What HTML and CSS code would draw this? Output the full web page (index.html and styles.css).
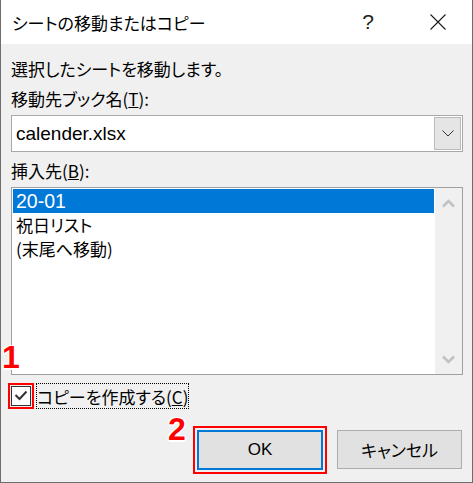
FILE: index.html
```html
<!DOCTYPE html>
<html lang="ja">
<head>
<meta charset="utf-8">
<title>シートの移動またはコピー</title>
<link rel="stylesheet" href="styles.css">
</head>
<body>
<div class="window">
  <div class="titlebar">
    <div class="title">シートの移動またはコピー</div>
    <div class="help">?</div>
    <div class="close">
      <svg width="16" height="16" viewBox="0 0 16 16"><path d="M0.5 0.5L15.5 15.5M15.5 0.5L0.5 15.5" stroke="#1a1a1a" stroke-width="1.1" fill="none"/></svg>
    </div>
  </div>
  <div class="content">
    <div class="label">選択したシートを移動します。</div>
    <div class="label second">移動先ブック名(<u>T</u>):</div>
    <div class="combo">
      <span class="combo-text">calender.xlsx</span>
      <span class="combo-btn"><svg width="12" height="7" viewBox="0 0 12 7"><polyline points="0.5,0.5 6,6 11.5,0.5" stroke="#333" stroke-width="1" fill="none"/></svg></span>
    </div>
    <div class="label third">挿入先(<u>B</u>):</div>
    <div class="listbox">
      <ul class="items">
        <li class="item selected"><span class="lat">20-01</span></li>
        <li class="item">祝日リスト</li>
        <li class="item">(末尾へ移動)</li>
      </ul>
      <div class="scrollbar">
        <div class="arrow"><svg width="13" height="9" viewBox="0 0 13 9"><polyline points="1,7.5 6.5,2 12,7.5" stroke="#c2c2c2" stroke-width="2.6" fill="none"/></svg></div>
        <div class="arrow"><svg width="13" height="9" viewBox="0 0 13 9"><polyline points="1,1.5 6.5,7 12,1.5" stroke="#c2c2c2" stroke-width="2.6" fill="none"/></svg></div>
      </div>
    </div>
    <div class="check-row">
      <span class="checkbox"><svg width="18" height="18" viewBox="0 0 18 18"><polyline points="3.5,8 7.5,12 14.5,4.5" stroke="#333" stroke-width="2" fill="none"/></svg></span>
      <span class="check-label">コピーを作成する(<u>C</u>)</span>
    </div>
    <div class="buttons">
      <button class="btn ok">OK</button>
      <button class="btn">キャンセル</button>
    </div>
  </div>
  <div class="marker m1">1</div>
  <div class="marker m2">2</div>
</div>
</body>
</html>
```
FILE: styles.css
```css
html, body {
  margin: 0;
  padding: 0;
  background: #fff;
}

.window {
  position: relative;
  width: 473px;
  height: 483px;
  box-sizing: border-box;
  border: 1px solid #6d6d6d;
  border-top: 0;
  background: #f0f0f0;
  display: flex;
  flex-direction: column;
  font-family: "Noto Sans CJK JP", sans-serif;
  font-feature-settings: "palt";
  color: #000;
}

.titlebar {
  flex: none;
  height: 44px;
  background: #fff;
  display: flex;
  align-items: center;
}

.title {
  flex: 1;
  padding-left: 11px;
  padding-top: 2px;
  font-size: 17px;
  line-height: 20px;
}

.help {
  width: 20px;
  text-align: center;
  font-family: "Liberation Sans", sans-serif;
  font-size: 21px;
  line-height: 24px;
  color: #222;
  margin-right: 52px;
}

.close {
  width: 16px;
  height: 16px;
  margin-right: 26px;
  display: flex;
}

.content {
  display: flex;
  flex-direction: column;
  padding: 14px 9px 0 10px;
}

.label {
  font-size: 17px;
  line-height: 21px;
  height: 21px;
  white-space: nowrap;
}

.label.second {
  margin-top: 9px;
}

.label.third {
  margin-top: 8px;
}

.combo {
  margin-top: 6px;
  height: 37px;
  box-sizing: border-box;
  border: 1px solid #a9a9a9;
  background: #fff;
  display: flex;
  align-items: center;
}

.combo-text {
  flex: 1;
  padding-left: 4px;
  font-family: "Liberation Sans", sans-serif;
  font-size: 19px;
}

.combo-btn {
  width: 27px;
  height: 33px;
  margin: 0 1px 0 0;
  box-sizing: border-box;
  border: 1px solid #bababa;
  background: #e5e5e5;
  display: flex;
  align-items: center;
  justify-content: center;
}

.listbox {
  margin-top: 6px;
  height: 188px;
  box-sizing: border-box;
  border: 1px solid #a0a0a0;
  background: #fff;
  display: flex;
}

.items {
  list-style: none;
  margin: 0;
  padding: 1px;
  width: 423px;
  box-sizing: border-box;
}

.item {
  height: 24px;
  line-height: 24px;
  padding-left: 3px;
  font-size: 17px;
  white-space: nowrap;
}

.item .lat {
  font-family: "Liberation Sans", sans-serif;
  font-size: 19.5px;
}

.item.selected {
  background: #0078d7;
  color: #fff;
}

.scrollbar {
  width: 27px;
  background: #f0f0f0;
  display: flex;
  flex-direction: column;
  justify-content: space-between;
}

.arrow {
  height: 30px;
  display: flex;
  align-items: center;
  justify-content: center;
}

.check-row {
  margin-top: 8px;
  height: 26px;
  display: flex;
  align-items: center;
}

.checkbox {
  width: 20px;
  height: 20px;
  box-sizing: border-box;
  border: 1px solid #333;
  background: #fff;
  outline: 2px solid #f00;
  outline-offset: 1px;
  display: flex;
  align-items: center;
  justify-content: center;
}

.check-label {
  margin-left: 5px;
  height: 26px;
  box-sizing: border-box;
  border: 1px dotted #000;
  display: flex;
  align-items: center;
  font-size: 17px;
  white-space: nowrap;
}

.buttons {
  margin-top: 21px;
  display: flex;
  justify-content: flex-end;
  gap: 14px;
  padding-right: 1px;
}

.btn {
  width: 125px;
  height: 39px;
  margin: 0;
  padding: 0;
  box-sizing: border-box;
  border: 1px solid #adadad;
  background: #e1e1e1;
  color: #000;
  font-family: "Noto Sans CJK JP", sans-serif;
  font-feature-settings: "palt";
  font-size: 17px;
}

.btn.ok {
  width: 126px;
  height: 40px;
  border: 2px solid #0078d7;
  outline: 2px solid #f00;
  outline-offset: 2px;
  font-family: "Liberation Sans", sans-serif;
}

.marker {
  position: absolute;
  font-family: "Liberation Sans", sans-serif;
  font-weight: bold;
  font-size: 32px;
  line-height: 1;
  color: #f00;
  text-shadow: 1.5px 0 0 #fff, -1.5px 0 0 #fff, 0 1.5px 0 #fff, 0 -1.5px 0 #fff,
    1px 1px 0 #fff, -1px 1px 0 #fff, 1px -1px 0 #fff, -1px -1px 0 #fff;
}

.m1 {
  left: 1px;
  top: 341px;
}

.m2 {
  left: 167px;
  top: 413px;
}
```
